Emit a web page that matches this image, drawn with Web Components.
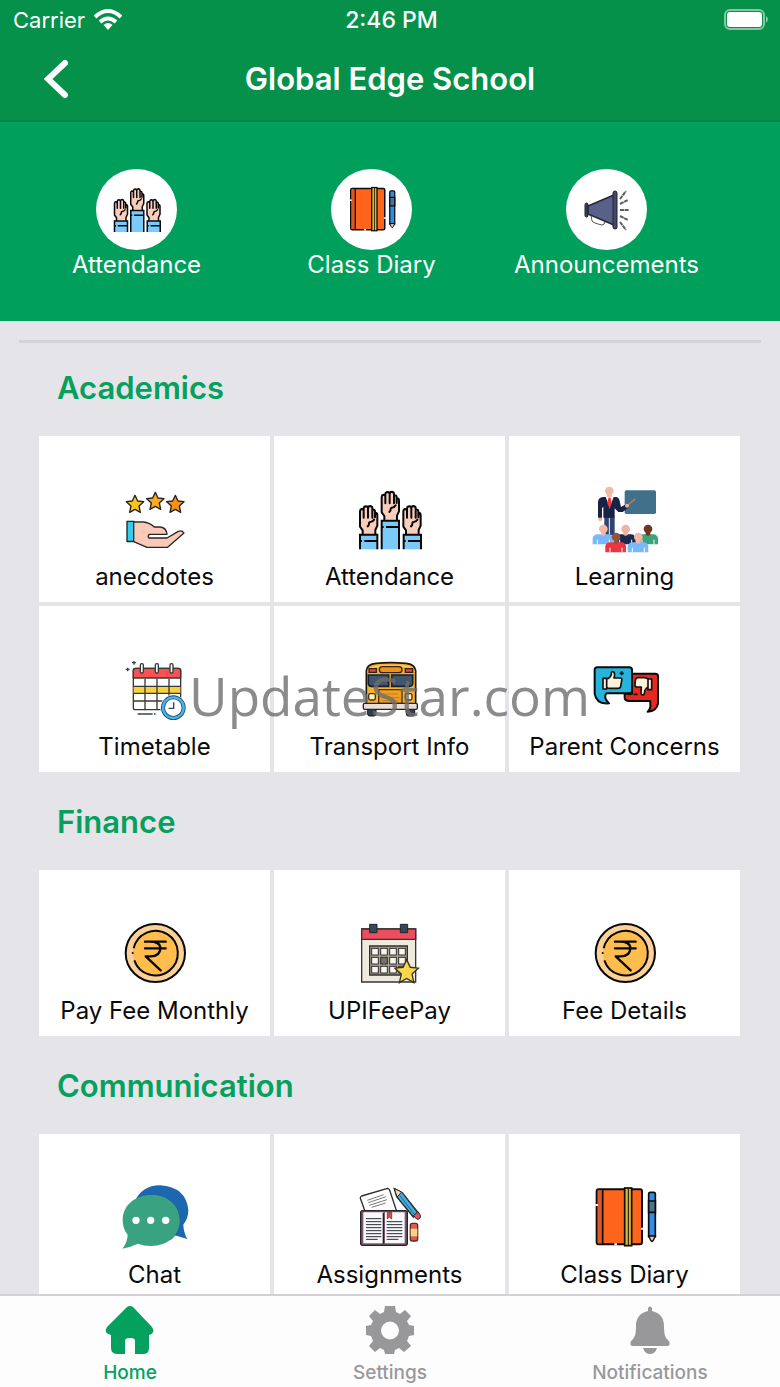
<!DOCTYPE html>
<html lang="en">
<head>
<meta charset="utf-8">
<meta name="viewport" content="width=device-width, initial-scale=1">
<title>Global Edge School</title>
<style>
  html, body { margin: 0; height: 100%; }
  body { font-family: Inter, "Liberation Sans", sans-serif; color: #0a0a0a; background: #e4e4e9; }
</style>
</head>
<body>
<school-app>
  <status-bar slot="top"></status-bar>
  <nav-header slot="top">Global Edge School</nav-header>
  <quick-links>
    <quick-link icon="hands">Attendance</quick-link>
    <quick-link icon="diary">Class Diary</quick-link>
    <quick-link icon="megaphone">Announcements</quick-link>
  </quick-links>
  <menu-divider></menu-divider>
  <menu-section heading="Academics">
    <menu-tile icon="anecdotes">anecdotes</menu-tile>
    <menu-tile icon="hands">Attendance</menu-tile>
    <menu-tile icon="learning">Learning</menu-tile>
    <menu-tile icon="timetable">Timetable</menu-tile>
    <menu-tile icon="bus">Transport Info</menu-tile>
    <menu-tile icon="concerns">Parent Concerns</menu-tile>
    <water-mark slot="overlay">UpdateStar.com</water-mark>
  </menu-section>
  <menu-section heading="Finance">
    <menu-tile icon="rupee">Pay Fee Monthly</menu-tile>
    <menu-tile icon="calendar">UPIFeePay</menu-tile>
    <menu-tile icon="rupee">Fee Details</menu-tile>
  </menu-section>
  <menu-section heading="Communication">
    <menu-tile icon="chat">Chat</menu-tile>
    <menu-tile icon="assignments">Assignments</menu-tile>
    <menu-tile icon="diary">Class Diary</menu-tile>
  </menu-section>
  <tab-bar slot="bottom">
    <tab-item icon="home" active>Home</tab-item>
    <tab-item icon="gear">Settings</tab-item>
    <tab-item icon="bell">Notifications</tab-item>
  </tab-bar>
</school-app>

<script>
const STAR = 'M0-26 8-9 26-7 12 6 16 25 0 16-16 25-12 6-26-7-8-9Z';
const star = (x, y, fill, s = 1) => `<path transform="translate(${x} ${y}) scale(${s})" d="${STAR}" fill="${fill}" stroke="#222" stroke-width="4" stroke-linejoin="round"/>`;
const hand = (x, y) => `<g transform="translate(${x} ${y})">
  <path d="M11 86V75L3 64V18q0-6 5-7 5 0 6 4V9q1-6 7-6 5 0 6 4 1-6 7-5 5 1 6 7 7-2 7 5v15q8-3 8 4v27l-6 11v15Z" fill="#f8cdb9"/>
  <path d="M11 86V75L3 64V18q0-6 5-7 6 0 6 6v20M14 20V9q1-6 7-6 6 1 6 6v28M27 9q0-7 7-7 6 1 6 7v28M40 14q8-3 8 5v17M48 22q7 0 7 7v32l-6 13v12M45 43q-4 7-11 7-4 0-4 5t-4 8" fill="none" stroke="#080808" stroke-width="6" stroke-linejoin="round" stroke-linecap="round"/></g>`;
const sleeve = (x, y, h) => `<path d="M${x} ${y}h52v${h}h-52Z" fill="#7bcbfa"/><path d="M${x} ${y+h}V${y}h52V${y+h}M${x} ${y+19}h6m7 0h37" fill="none" stroke="#080808" stroke-width="6"/>`;
const person = (x, y, skin, shirt) => `<path d="M${x-32} ${y+46}v-18q2-11 14-12h34q12 1 14 12v18Z" fill="${shirt}"/><path d="M${x-18} ${y+46}v-14m36 14v-14" stroke="#fff" stroke-width="3"/><circle cx="${x}" cy="${y}" r="13" fill="${skin}"/><path d="M${x-7} ${y+10}h14v7q-7 6-14 0Z" fill="${skin}"/>`;
const cells = (x0, y0, dx, dy, s, cols, rows) => { let r = ''; for (let j = 0; j < rows; j++) for (let i = 0; i < cols; i++) r += `<rect x="${x0+i*dx}" y="${y0+j*dy}" width="${s}" height="${s}" fill="${i===1&&j===1?'#77736b':'#f7f5ed'}" stroke="#302e2c" stroke-width="3"/>`; return r; };

const ICONS = {
  anecdotes: ['70 24 192 192', `${star(106,72,'#fcc41d')}${star(167,63,'#fca91d')}${star(227,72,'#fb8f16')}
    <path d="M102 128h29q17 1 33 13h15q20 2 22 21h-53v12h52l35-19q12-5 17 4l-50 43h-61l-39-17h-20Z" fill="#fac9b8"/>
    <path d="M102 126h29q17 1 33 15h18q18 2 20 22h-54q-4 8 0 11h54l34-20q11-4 17 5l-49 43h-62l-40-17h-20" fill="none" stroke="#2c2623" stroke-width="4" stroke-linejoin="round"/>
    <path d="M82 124h20v60H82Z" fill="#35cdee" stroke="#17272b" stroke-width="4"/>`],
  hands: ['54 24 192 192', `${hand(57,76)}${hand(122,33)}${hand(187,76)}${sleeve(60,164,44)}${sleeve(125,122,86)}${sleeve(191,164,44)}`],
  learning: ['67 24 192 192', `<rect x="162" y="31" width="94" height="71" rx="5" fill="#41718a"/>
    <path d="M101 110h31v55h-31Z" fill="#30446f"/><path d="M116 114v50" stroke="#eef" stroke-width="3"/>
    <path d="M82 113V66q1-14 15-15h39q9 1 11 12l4 18 16-9 8 10-19 14h-13l-11-11v28h-34V80l-4 5v28Z" fill="#182247"/>
    <path d="m105 51 12 31 12-31Z" fill="#fff"/><path d="m113 54-3 15 7 19 6-19-3-15Z" fill="#ed3a34"/>
    <path d="M83 114h11q1 9-5 10-6 0-6-10Z" fill="#f3b39d"/><circle cx="116" cy="33" r="13" fill="#f4b9a5"/><path d="M109 43h15v7l-8 5-7-5Z" fill="#f4b9a5"/>
    <path d="m168 79 26-23" stroke="#d67245" stroke-width="4"/><circle cx="169" cy="77" r="6" fill="#f3b39d"/>
    ${person(98,147,'#f4b9a5','#79b9fb')}${person(165,147,'#efb39f','#1b2850')}${person(232,147,'#70351f','#3da37a')}${person(136,171,'#95523c','#ee343c')}${person(203,171,'#f4b9a5','#79b9fb')}`],
  timetable: ['70 24 192 192', `<rect x="101" y="55" width="142" height="124" rx="6" fill="#fff" stroke="#383838" stroke-width="4"/>
    <path d="M101 84V62q0-7 7-7h128q7 0 7 7v22Z" fill="#fa5152" stroke="#383838" stroke-width="4"/>
    <path d="M102 110h140v20H102Z" fill="#fad13d"/><path d="M101 109h142M101 130h142M101 153h142M136 87v91m36-91v91m36-91v91" fill="none" stroke="#383838" stroke-width="4"/>
    <g fill="#fff" stroke="#383838" stroke-width="4"><rect x="122" y="41" width="9" height="28" rx="4"/><rect x="167" y="41" width="9" height="28" rx="4"/><rect x="211" y="41" width="9" height="28" rx="4"/></g>
    <circle cx="221" cy="173" r="39" fill="#fff"/><circle cx="221" cy="173" r="31" fill="#fff" stroke="#244865" stroke-width="12"/><circle cx="221" cy="173" r="31" fill="none" stroke="#45b4ed" stroke-width="7"/>
    <path d="M222 157v18h-15M114 192h45m4 0h5M103 33v11m-6-6h12M84 53v11m-6-6h12" fill="none" stroke="#35435c" stroke-width="4"/>`],
  bus: ['54 24 192 192', `<path d="M83 174h25v18q0 6-6 6H89q-6 0-6-6Zm116 0h25v18q0 6-6 6h-13q-6 0-6-6Z" fill="#333e4d" stroke="#161616" stroke-width="3"/>
    <path d="M79 164V62q2-20 29-22 45-4 90 0 27 2 29 22v102Z" fill="#f3b32f" stroke="#1d1710" stroke-width="5"/>
    <path d="M84 65q7-15 36-17h68q29 2 35 17" fill="none" stroke="#ffdc77" stroke-width="3"/>
    <rect x="118" y="50" width="68" height="18" rx="9" fill="#ed941d" stroke="#372617" stroke-width="4"/>
    <path d="M87 56h22v11H87Zm109 0h22v11h-22Z" fill="#df4937" stroke="#38201a" stroke-width="4"/>
    <path d="M85 75h61v34H94q-7 0-9-7Zm70 0h63v27q-1 7-9 7h-54Z" fill="#40566e" stroke="#17202b" stroke-width="5"/>
    <path d="M116 119h70v41h-70Z" fill="#ef9f23" stroke="#4a3016" stroke-width="4"/><path d="M128 132h46m-50 11h54m-51 9h47" stroke="#a8701c" stroke-width="2"/>
    <rect x="86" y="131" width="20" height="19" rx="5" fill="#fff0ba" stroke="#442e1d" stroke-width="4"/><rect x="196" y="131" width="20" height="19" rx="5" fill="#fff0ba" stroke="#442e1d" stroke-width="4"/>
    <rect x="70" y="160" width="162" height="18" rx="4" fill="#e8dedc" stroke="#28211e" stroke-width="4"/>`],
  concerns: ['67 24 192 192', `<path d="M184 71h70q8 0 8 8v82q-4 23-31 24 12-10 7-32h-63q-11 0-13-9v-13h22Z" fill="#e42a20" stroke="#090909" stroke-width="6" stroke-linejoin="round"/>
    <path d="M80 52h96q8 0 8 8v62q0 8-8 8h-69q-10 12 8 30-38 4-43-29V60q0-8 8-8Z" fill="#25b4dc" stroke="#090909" stroke-width="6" stroke-linejoin="round"/>
    <path d="M97 85h11v32H97Zm11 2q10-2 14-13v-5q1-6 7-3 5 4 1 18h20q5 1 3 8l-3 17q-1 6-8 6h-25q-5 0-9-3Z" fill="#fff3dc" stroke="#111" stroke-width="5" stroke-linejoin="round"/>
    <path d="M243 87h-11v32h11Zm-11 0q-5-4-13-4h-16q-8 0-9 8l-1 12q-1 7 5 8h14l-1 18q1 8 8 5 4-5 3-12 5-9 10-11Z" fill="#fff3dc" stroke="#111" stroke-width="5" stroke-linejoin="round"/>
    <path d="M153 64v12m-6-6h12M174 133h6m9 0h12" stroke="#111" stroke-width="5"/>`],
  rupee: ['70 36 192 192', `<ellipse cx="167" cy="129" rx="89" ry="87" fill="#fbd198" stroke="#080808" stroke-width="6"/><circle cx="167" cy="129" r="68" fill="#ffbd4e"/>
    <path d="M102 115a67 67 0 1 1 2 36" fill="none" stroke="#080808" stroke-width="6"/><circle cx="99" cy="129" r="3" fill="#080808"/>
    <path d="M136 95h62m-62 20h62M150 95q32 0 32 20-1 24-29 24h-15l45 42" fill="none" stroke="#080808" stroke-width="7" stroke-linejoin="round" stroke-linecap="round"/>`],
  calendar: ['774 36 192 192', `<path d="M785 57h162v159H785Z" fill="#eeebde" stroke="#373634" stroke-width="4"/><path d="M785 57h162v31H785Z" fill="#ed4d5c" stroke="#343434" stroke-width="4"/>
    <path d="M809 43h22v25h-22Zm92 0h22v25h-22Z" fill="#34475d" stroke="#202631" stroke-width="3"/>
    <path d="M809 108h113v87H809Z" fill="#aaa799" stroke="#33312f" stroke-width="4"/>${cells(815,115,27,27,20,4,3)}
    <path transform="translate(920 184) scale(1.35)" d="${STAR}" fill="#f8d74b" stroke="#383329" stroke-width="3"/>`],
  chat: ['70 33 192 192', `<path d="M104 82q22-51 77-51 79 5 85 75 0 25-15 43 1 24 12 43l-38-11Z" fill="#1d67b0"/>
    <path d="M155 60c51 0 86 32 86 76 0 45-36 77-87 77q-22 0-39-7-21 10-47 15 15-18 16-42-15-17-15-43c0-44 36-76 86-76Z" fill="#39a280"/>
    <path d="M242 136c0 27-12 46-30 58M241 136c0-27-12-49-33-63" fill="none" stroke="#235d86" stroke-width="2"/><g fill="#fff"><circle cx="109" cy="136" r="11"/><circle cx="153" cy="136" r="11"/><circle cx="198" cy="136" r="11"/></g>`],
  assignments: ['774 33 192 192', `<path d="m795 109-14-39q-1-5 4-7l75-22q7-2 9 5l21 63Z" fill="#fff" stroke="#2f2b2d" stroke-width="4"/>
    <path d="m802 76 49-17m-46 24 53-18m-50 26 53-17m-46 23 42-13" stroke="#333" stroke-width="2"/>
    <rect x="782" y="107" width="140" height="104" rx="6" fill="#775b68" stroke="#2b2025" stroke-width="4"/><path d="M790 112h61v93h-61Zm65 0h59v93h-59Z" fill="#f9f8fc"/><path d="M850 113v93" stroke="#222" stroke-width="4"/>
    <path d="M798 131h46m-46 9h46m-46 9h46m-46 9h46m-46 9h46m-46 9h46m-46 9h46m-46 8h35M860 140h47m-47 9h47m-47 9h47m-47 9h47m-47 9h47m-47 9h47m-47 8h35" stroke="#292b36" stroke-width="3"/>
    <path d="M862 112h13v20l-7-6-6 6Z" fill="#d74948" stroke="#522b31" stroke-width="2"/>
    <path d="m883 41 24 12 49 62-16 11-50-61Z" fill="#42aedb" stroke="#292529" stroke-width="4"/><path d="m883 41 22 10-14 15Z" fill="#f4d9b1" stroke="#292529" stroke-width="3"/><path d="m900 62 46 60m-36-65 42 57" stroke="#263c58" stroke-width="2"/>
    <path d="m940 122 14-12 7 11q2 12-10 12Z" fill="#e55149" stroke="#292529" stroke-width="3"/><rect x="931" y="145" width="22" height="53" rx="6" fill="#df5a4a" stroke="#562d27" stroke-width="4"/><path d="M932 161h20v23h-20Z" fill="#ffd383"/>`],
  diary: ['97 33 192 192', `<rect x="108" y="43" width="136" height="165" rx="6" fill="#ff641d" stroke="#0b0b0b" stroke-width="6"/><path d="M111 46h13v159h-13Z" fill="#dc5824"/><path d="M126 45v162" stroke="#0b0b0b" stroke-width="5"/>
    <rect x="192" y="39" width="21" height="173" fill="#ddb92b" stroke="#0b0b0b" stroke-width="5"/><path d="M203 40v171" stroke="#0b0b0b" stroke-width="3"/><path d="M104 90h8m49 118h8m72-47h8" stroke="#fff" stroke-width="6"/>
    <path d="M264 57q0-5 5-5h10q5 0 5 5v128H264Z" fill="#308ce5" stroke="#0b0b0b" stroke-width="5"/><path d="M264 78h20v34h-20Z" fill="#4b7392" stroke="#0b0b0b" stroke-width="5"/><path d="M264 183h20l-6 13-4 4-4-4Z" fill="#f9bc9c" stroke="#0b0b0b" stroke-width="4"/>`],
  megaphone: ['0 0 48 48', `<path d="m8 29 1 6q1 2 10 4 3 0 3-4" fill="none" stroke="#555" stroke-width="1"/><path d="M5 20 31 9v30L5 28Z" fill="#59618a" stroke="#272735" stroke-width="1.5"/>
    <rect x="2" y="17" width="3" height="14" rx="1.5" fill="#3b3d5b" stroke="#222" stroke-width="1"/><rect x="30" y="5" width="4" height="38" rx="2" fill="#44486a" stroke="#22222d" stroke-width="1"/>
    <path d="m37 13 6-8m-6 13 8-4m-8 10h9m-9 6 8 4m-8 2 6 8" stroke="#5c5c5c" stroke-width="2" stroke-dasharray="4 .6"/>`],
  home: ['0 0 48 48', `<path d="M21 1q3-2 6 0l19 20q4 6-3 8v13q0 6-6 6h-8V35q0-3-4-3h-2q-4 0-4 3v13h-7q-7 0-7-6V29q-8-2-4-8Z" fill="currentColor"/>`],
  gear: ['0 0 48 48', `<path fill="currentColor" fill-rule="evenodd" d="M19 0h10l1 6 4 2 5-4 6 6-4 5 2 4 5 1v9l-5 1-2 5 4 5-7 6-5-4-4 2-1 4H19l-1-4-4-2-5 4-6-6 4-5-2-5-5-1v-9l5-1 2-4-4-5 6-6 5 4 4-2ZM24 15.500a9 9 0 1 0 0 18 9 9 0 1 0 0-18Z"/>`],
  bell: ['0 0 48 48', `<path fill="currentColor" d="M22 5V2q2-3 4 0v3c9 2 12 8 12 15 0 8 1 12 5 15q2 5-2 5H7q-4 0-2-5c4-3 5-7 5-15C10 13 13 7 22 5ZM17 42h14q-2 6-7 6t-7-6Z"/>`]
};

/* Base class: fills an open shadow root with styles and markup. */
class Base extends HTMLElement {
  connectedCallback() {
    if (this.shadowRoot) return;
    const t = document.createElement('template');
    t.innerHTML = this.view();
    this.attachShadow({ mode: 'open' }).append(t.content.cloneNode(true));
  }
}

customElements.define('ui-icon', class extends Base {
  view() {
    const [box, art] = ICONS[this.getAttribute('name')];
    return `<style>:host{display:block;width:64px;height:64px}svg{display:block;width:100%;height:100%;overflow:visible}</style>
      <svg viewBox="${box}" aria-hidden="true">${art}</svg>`;
  }
});

customElements.define('school-app', class extends Base {
  view() { return `<style>
      :host{display:flex;flex-direction:column;height:100vh}
      main{flex:1;min-height:0;overflow-y:auto;scrollbar-width:none}
    </style><slot name="top"></slot><main><slot></slot></main><slot name="bottom"></slot>`; }
});

customElements.define('status-bar', class extends Base {
  view() { return `<style>
      :host{display:grid;grid-template-columns:1fr auto 1fr;align-items:center;height:40px;padding:0 10px 0 13px;background:#05914a;color:#fff;font-size:22px;line-height:28px}
      .left{display:flex;align-items:center;gap:9px}
      .time{font-size:23px;font-weight:500}
      .battery{justify-self:end}
      svg{display:block}
    </style>
    <span class="left">Carrier
      <svg width="28" height="22" viewBox="0 0 28 22" aria-hidden="true"><g fill="none" stroke="#fff" stroke-width="4"><path d="M1 8q13-12 26 0"/><path d="M6 13q8-7 16 0"/></g><path d="m9.500 16 4.500 5 4.500-5q-4.500-4-9 0Z" fill="#fff"/></svg>
    </span>
    <span class="time">2:46 PM</span>
    <svg class="battery" width="46" height="22" viewBox="0 0 46 22" aria-hidden="true"><rect x="1" y="1" width="39" height="19" rx="5" fill="none" stroke="#83c7a3" stroke-width="2"/><rect x="3" y="3" width="35" height="15" rx="3" fill="#fff"/><path d="M42 7q4 3 0 7Z" fill="#83c7a3"/></svg>`; }
});

customElements.define('nav-header', class extends Base {
  view() { return `<style>
      :host{display:grid;grid-template-columns:80px 1fr 80px;align-items:center;height:82px;padding-bottom:2px;background:#05914a;color:#fff;box-sizing:border-box;border-bottom:2px solid #04874a}
      button{justify-self:end;width:48px;height:48px;padding:0;border:0;background:none;color:inherit}
      svg{display:block;margin:auto}
      h1{margin:0;text-align:center;font-size:31px;line-height:40px;font-weight:600}
    </style>
    <button aria-label="Back"><svg width="24" height="40" viewBox="0 0 24 40"><path d="M21 4 4 20l17 16" fill="none" stroke="#fff" stroke-width="6" stroke-linecap="round"/></svg></button>
    <h1><slot></slot></h1>`; }
});

customElements.define('quick-links', class extends Base {
  view() { return `<style>
      :host{display:grid;grid-template-columns:repeat(3,1fr);padding:47px 56px 41px 19px;background:#009f5b}
    </style><slot></slot>`; }
});

customElements.define('quick-link', class extends Base {
  view() { return `<style>
      :host{display:block}
      a{display:flex;flex-direction:column;align-items:center;color:#fff;text-decoration:none;font-size:24px;line-height:30px}
      .disc{display:grid;place-items:center;width:81px;height:81px;border-radius:50%;background:#fff}
      ui-icon{width:48px;height:48px}
    </style><a href="#"><span class="disc"><ui-icon name="${this.getAttribute('icon')}"></ui-icon></span><slot></slot></a>`; }
});

customElements.define('menu-divider', class extends Base {
  view() { return `<style>:host{display:block;padding:19px 19px 25px}hr{margin:0;border:0;height:3px;background:#d3d3d8}</style><hr>`; }
});

customElements.define('menu-section', class extends Base {
  view() { return `<style>
      :host{display:block;padding:0 40px 30px 39px}
      h2{margin:0 0 28px;padding-left:18px;font-size:31px;line-height:40px;font-weight:600;color:#05a05e}
      .grid{position:relative;display:grid;grid-template-columns:repeat(3,1fr);gap:4px}
    </style><h2>${this.getAttribute('heading')}</h2><div class="grid"><slot></slot><slot name="overlay"></slot></div>`; }
});

customElements.define('menu-tile', class extends Base {
  view() { return `<style>
      :host{display:block;background:#fff}
      a{display:flex;flex-direction:column;align-items:center;padding:52px 0 10px;color:inherit;text-decoration:none;font-size:24px;line-height:30px;white-space:nowrap}
      ui-icon{margin-bottom:10px}
    </style><a href="#"><ui-icon name="${this.getAttribute('icon')}"></ui-icon><slot></slot></a>`; }
});

/* Translucent mark lying over the last row of a section's tiles. */
customElements.define('water-mark', class extends Base {
  view() { return `<style>
      :host{position:absolute;left:0;right:0;bottom:44px;text-align:center;font:53px/64px "Open Sans",sans-serif;color:rgba(110,110,110,.8);pointer-events:none}
    </style><slot></slot>`; }
});

customElements.define('tab-bar', class extends Base {
  view() { return `<style>
      :host{display:block;background:#fdfdfe;border-top:2px solid #d2d2d6}
      nav{display:grid;grid-template-columns:repeat(3,1fr);padding:10px 0 2px}
    </style><nav><slot></slot></nav>`; }
});

customElements.define('tab-item', class extends Base {
  view() { return `<style>
      :host{display:block;color:#98989b}
      :host([active]){color:#04a05e}
      a{display:flex;flex-direction:column;align-items:center;gap:7px;color:inherit;text-decoration:none;font-size:19px;line-height:24px;font-weight:500}
      ui-icon{width:48px;height:48px}
    </style><a href="#"><ui-icon name="${this.getAttribute('icon')}"></ui-icon><slot></slot></a>`; }
});
</script>
</body>
</html>
